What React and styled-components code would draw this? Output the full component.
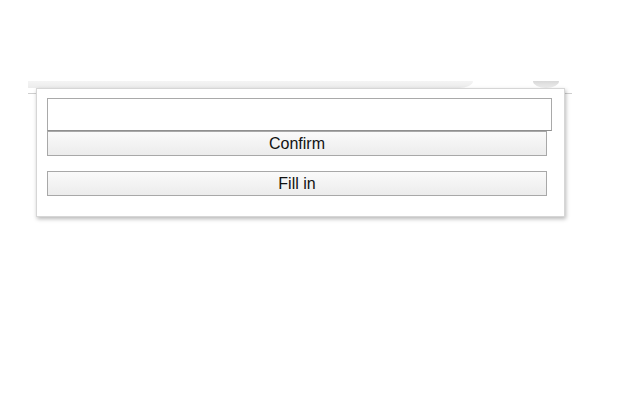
import React from "react";
import styled, { createGlobalStyle } from "styled-components";

const Global = createGlobalStyle`
  html, body { margin: 0; padding: 0; background: #fff; }
  body { font-family: "Liberation Sans", Arial, sans-serif; }
`;

const Page = styled.div`
  width: 640px;
  height: 400px;
  padding: 81px 0 0 28px;
  box-sizing: border-box;
`;

const Toolbar = styled.div`
  position: relative;
  width: 544px;
  display: flex;
  flex-direction: column;
  gap: 5px;
`;

const TopRow = styled.div`
  display: flex;
  align-items: flex-start;
  height: 7px;
`;

const Strip = styled.div`
  height: 7px;
  width: 445px;
  background: linear-gradient(#f4f4f4, #ececec);
  border-bottom-right-radius: 14px 7px;
`;

const Tab = styled.div`
  margin-left: auto;
  margin-right: 13px;
  width: 26px;
  height: 7px;
  background: linear-gradient(#d8d8d8, #eeeeee);
  border-radius: 0 0 13px 13px / 0 0 7px 7px;
`;

const RuleRow = styled.div`
  display: flex;
  justify-content: space-between;
  height: 1px;
`;

const Rule = styled.div`
  width: ${(p) => p.$w}px;
  height: 1px;
  background: #cfcfcf;
`;

const Popup = styled.div`
  position: absolute;
  top: 7px;
  left: 8px;
  width: 529px;
  height: 129px;
  box-sizing: border-box;
  background: #fff;
  border: 1px solid #d6d6d6;
  box-shadow: 1px 2px 4px rgba(0, 0, 0, 0.28);
  padding: 9px 10px;
  display: flex;
  flex-direction: column;
  align-items: flex-start;
`;

const Field = styled.input`
  width: 505px;
  height: 33px;
  box-sizing: border-box;
  margin: 0;
  border: 1px solid #a9a9a9;
  border-bottom-color: #8f8f8f;
  background: #fff;
  outline: none;
`;

const Button = styled.button`
  width: 500px;
  height: 25px;
  box-sizing: border-box;
  margin: ${(p) => p.$top || 0}px 0 0 0;
  padding: 0;
  border: 1px solid #a8a8a8;
  background: linear-gradient(#fafafa, #ececec);
  font-family: "Liberation Sans", Arial, sans-serif;
  font-size: 16px;
  color: #111;
  line-height: 22px;
`;

export default function App() {
  return (
    <>
      <Global />
      <Page>
        <Toolbar>
          <TopRow>
            <Strip />
            <Tab />
          </TopRow>
          <RuleRow>
            <Rule $w={9} />
            <Rule $w={7} />
          </RuleRow>
          <Popup>
            <Field type="text" />
            <Button>Confirm</Button>
            <Button $top={15}>Fill in</Button>
          </Popup>
        </Toolbar>
      </Page>
    </>
  );
}
